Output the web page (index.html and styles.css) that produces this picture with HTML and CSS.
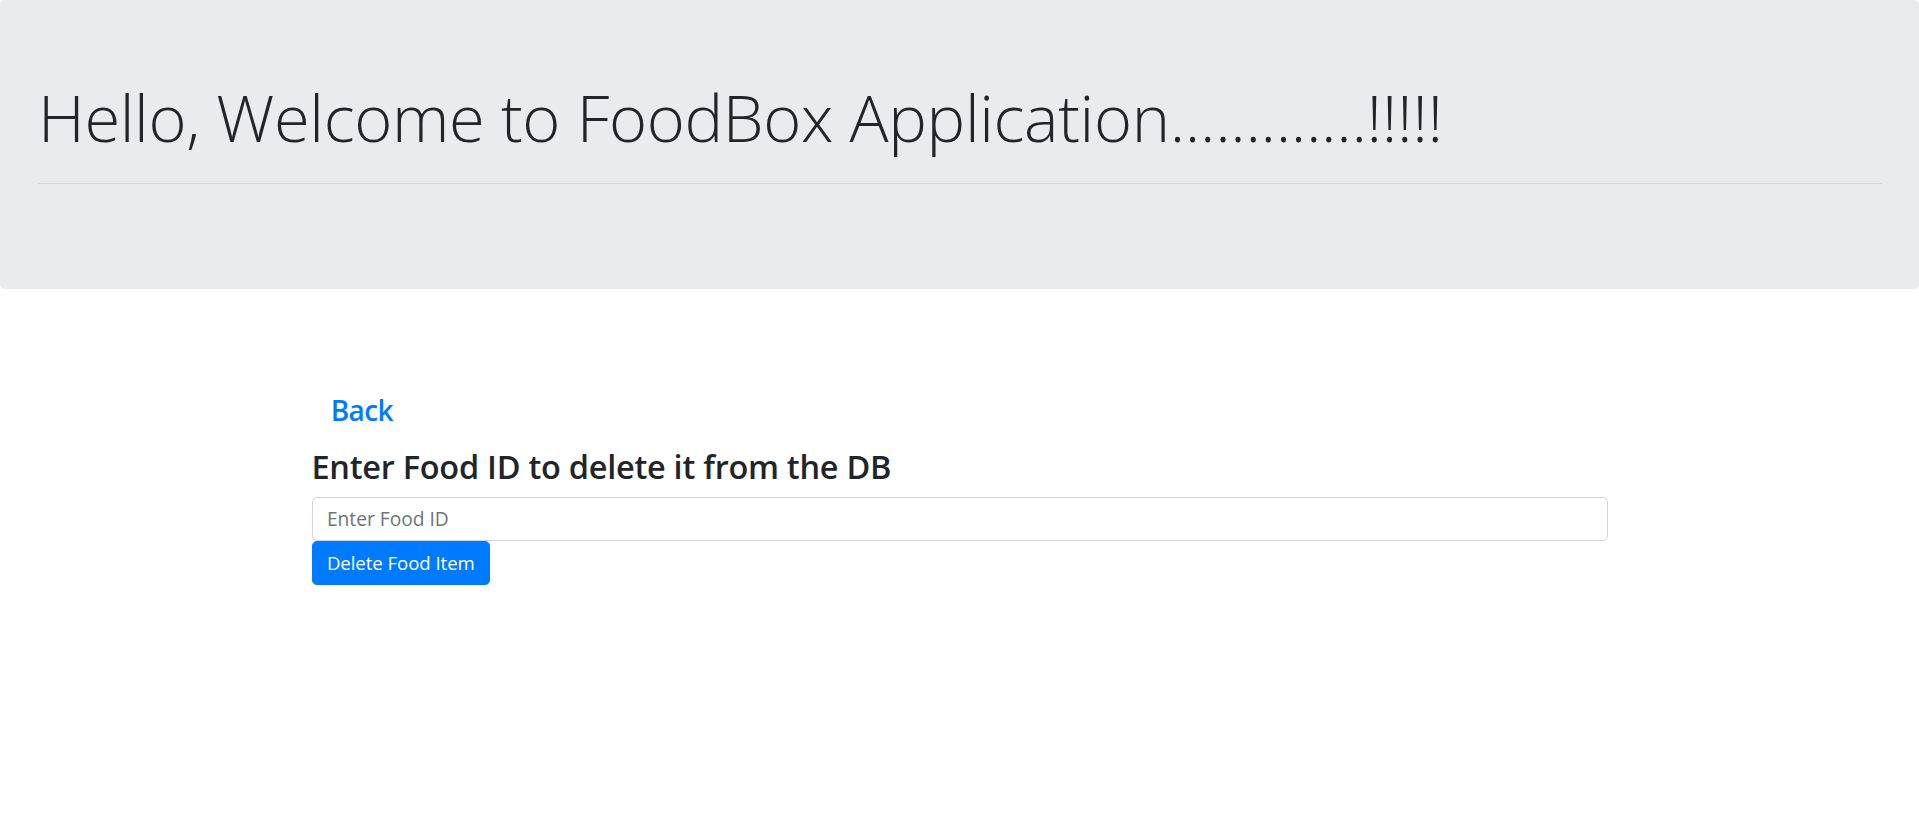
FILE: index.html
```html
<!DOCTYPE html>
<html lang="en">
<head>
<meta charset="utf-8">
<title>FoodBox</title>
<link rel="stylesheet" href="styles.css">
</head>
<body>
<div class="jumbotron">
  <h1 class="display">Hello, Welcome to FoodBox Application.............!!!!!</h1>
  <hr class="rule">
</div>
<div class="container">
  <h4 class="nav-head"><a class="back" href="#">Back</a></h4>
  <h3 class="title">Enter Food ID to delete it from the DB</h3>
  <form class="form">
    <input class="field" type="text" placeholder="Enter Food ID">
    <button class="btn" type="button">Delete Food Item</button>
  </form>
</div>
</body>
</html>
```
FILE: styles.css
```css
html, body {
  margin: 0;
  padding: 0;
  background: #fff;
}
body {
  font-family: "Open Sans", "Noto Sans", sans-serif;
  color: #212529;
  font-size: 19.2px;
}
.jumbotron {
  background: #e9ecef;
  border-radius: 4.8px;
  padding: 77px 37px 105px 38px;
}
.display {
  margin: 0;
  font-size: 65px;
  letter-spacing: -0.35px;
  font-weight: 300;
  line-height: 80.6px;
}
.rule {
  margin: 25px 0 0 0;
  border: 0;
  border-top: 1px solid rgba(0,0,0,0.1);
  height: 0;
}
.container {
  width: 1296px;
  margin: 0 auto;
  padding-top: 95px;
}
.nav-head {
  margin: 0;
  font-size: 28px;
  letter-spacing: -0.6px;
  font-weight: 600;
  line-height: 34.6px;
}
.back {
  display: inline-block;
  padding: 9.6px 19.2px;
  color: #007bff;
  text-decoration: none;
}
.title {
  margin: 10px 0 9px 0;
  font-size: 32.5px;
  letter-spacing: -0.27px;
  font-weight: 600;
  line-height: 40.3px;
}
.form {
  margin: 0;
}
.field {
  display: block;
  box-sizing: border-box;
  width: 100%;
  height: 44px;
  margin: 0;
  padding: 0 14.4px;
  font-family: inherit;
  font-size: 19.2px;
  color: #495057;
  background: #fff;
  border: 1px solid #ced4da;
  border-radius: 4.8px;
  outline: none;
}
.field::placeholder {
  color: #6c757d;
  opacity: 1;
}
.btn {
  display: inline-block;
  box-sizing: border-box;
  height: 44px;
  margin: 0;
  padding: 0 14.4px;
  font-family: inherit;
  font-size: 18.6px;
  letter-spacing: -0.05px;
  color: #fff;
  background: #007bff;
  border: 1px solid #007bff;
  border-radius: 4.8px;
  cursor: pointer;
}
```
